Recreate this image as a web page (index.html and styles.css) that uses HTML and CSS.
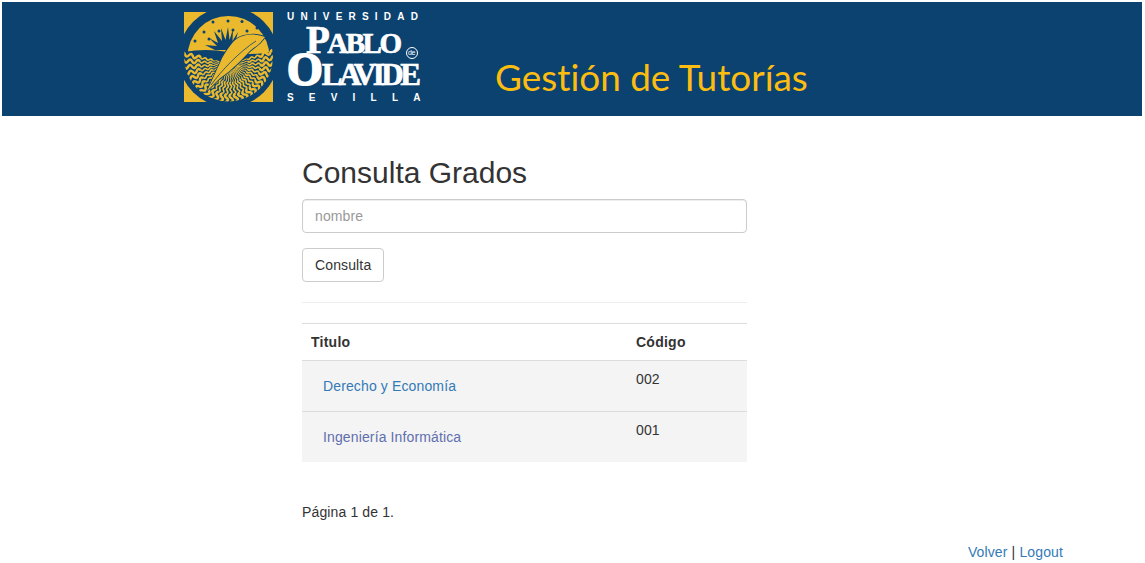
FILE: index.html
```html
<!doctype html>
<html lang="es">
  <head>
    <meta charset="UTF-8" />
    <meta name="viewport" content="width=device-width, initial-scale=1.0" />
    <title>Gestión de Tutorías</title>
    <link rel="stylesheet" href="styles.css">
  </head>
  <body>
    <header class="banner">
      <svg class="emblem" viewBox="0 0 89 90" aria-hidden="true">
        <defs>
          <clipPath id="disc"><circle cx="44.5" cy="45" r="44.500"/></clipPath>
          <g id="ray">
            <path stroke-width="1" d="M6 0Q7.500 .8 9 0T12 0T15 0T18 0"/>
            <path stroke-width="1.700" d="M18 0Q19.500 1.600 21 0T24 0T27 0T30 0"/>
            <path stroke-width="2.500" d="M30 0Q32 3.400 34 0T38 0T42 0T46 0T50 0T54 0"/>
          </g>
        </defs>
        <rect width="89" height="90" fill="#eab92e"/>
        <circle cx="44.500" cy="45" r="50" fill="#0b4270"/>
        <circle cx="44.500" cy="45" r="41" fill="#eab92e"/>
        <g clip-path="url(#disc)">
          <path d="M0 40Q22 36 44 40T89 40V90H0Z" fill="#0b4270"/>
          <g class="waves">
            <use href="#ray" transform="translate(46 52) rotate(-16)"/>
            <use href="#ray" transform="translate(46 52) rotate(-8)"/>
            <use href="#ray" transform="translate(46 52)"/>
            <use href="#ray" transform="translate(46 52) rotate(8)"/>
            <use href="#ray" transform="translate(46 52) rotate(16)"/>
            <use href="#ray" transform="translate(46 52) rotate(24)"/>
            <use href="#ray" transform="translate(46 52) rotate(32)"/>
            <use href="#ray" transform="translate(46 52) rotate(40)"/>
            <use href="#ray" transform="translate(46 52) rotate(48)"/>
            <use href="#ray" transform="translate(46 52) rotate(56)"/>
            <use href="#ray" transform="translate(46 52) rotate(64)"/>
            <use href="#ray" transform="translate(46 52) rotate(72)"/>
            <use href="#ray" transform="translate(46 52) rotate(80)"/>
            <use href="#ray" transform="translate(46 52) rotate(88)"/>
            <use href="#ray" transform="translate(46 52) rotate(96)"/>
            <use href="#ray" transform="translate(46 52) rotate(104)"/>
            <use href="#ray" transform="translate(46 52) rotate(112)"/>
            <use href="#ray" transform="translate(46 52) rotate(120)"/>
            <use href="#ray" transform="translate(46 52) rotate(128)"/>
            <use href="#ray" transform="translate(46 52) rotate(136)"/>
            <use href="#ray" transform="translate(46 52) rotate(144)"/>
            <use href="#ray" transform="translate(46 52) rotate(152)"/>
            <use href="#ray" transform="translate(46 52) rotate(160)"/>
            <use href="#ray" transform="translate(46 52) rotate(168)"/>
            <use href="#ray" transform="translate(46 52) rotate(176)"/>
            <use href="#ray" transform="translate(46 52) rotate(184)"/>
            <use href="#ray" transform="translate(46 52) rotate(192)"/>
          </g>
        </g>
        <g fill="#0b4270">
          <circle cx="29" cy="10" r="1.500"/><circle cx="44" cy="9" r="1.500"/><circle cx="58" cy="9.500" r="1.500"/>
          <circle cx="20" cy="20" r="1.500"/><circle cx="35" cy="19" r="1.500"/><circle cx="49" cy="18" r="1.500"/>
          <circle cx="63" cy="19" r="1.500"/><circle cx="73" cy="16" r="1.500"/><circle cx="11" cy="29" r="1.500"/>
          <circle cx="25" cy="27" r="1.500"/><circle cx="68" cy="27" r="1.500"/><circle cx="79" cy="25" r="1.500"/>
          <path d="M44 15L45.500 28L49 17L48.500 29L54 20L51 31L59 25L53 34L63 31L55 38H31L21 33L33 34L25 26L34 31L30 19L38 29L37 16L41.500 28Z"/>
        </g>
        <path class="feather" d="M81 25C74 22 66 22 59 24C52 26 49 30 46 34C42 39 38 45 36 51C33 57 31 62 29 66L23 79L31 71C34 68 36 66 39 64C43 61 47 58 51 54C56 50 60 45 64 41C69 36 73 34 76 31Z"/>
        <path d="M27 73C38 58 55 40 72 29" fill="none" stroke="#0b4270" stroke-width=".8"/>
      </svg>

      <div class="wordmark">
        <div class="wordmark-top">UNIVERSIDAD</div>
        <div class="wordmark-pablo">
          <span class="cap">P</span>ABLO<span class="de">de</span>
        </div>
        <div class="wordmark-olavide">
          <span class="cap">O</span>LAVIDE
        </div>
        <div class="wordmark-bottom">SEVILLA</div>
      </div>

      <div class="app-title">Gestión de Tutorías</div>
    </header>

    <main class="content">
      <h2>Consulta Grados</h2>
      <form>
        <input class="form-control" type="text" placeholder="nombre" />
        <button class="btn" type="button">Consulta</button>
      </form>
      <hr />
      <table class="grid">
        <thead>
          <tr>
            <th class="col-title">Titulo</th>
            <th>Código</th>
          </tr>
        </thead>
        <tbody>
          <tr>
            <td><a class="btn-link" href="#">Derecho y Economía</a></td>
            <td>002</td>
          </tr>
          <tr>
            <td><a class="btn-link visited" href="#">Ingeniería Informática</a></td>
            <td>001</td>
          </tr>
        </tbody>
      </table>
      <p class="pages">Página 1 de 1.</p>
    </main>

    <footer class="links">
      <a href="#">Volver</a> | <a href="#">Logout</a>
    </footer>
  </body>
</html>
```

FILE: styles.css
```css
* {
  box-sizing: border-box;
}

body {
  margin: 2px 3px 0 2px;
  font-family: 'Liberation Sans', Arial, sans-serif;
  font-size: 14px;
  line-height: 20px;
  letter-spacing: 0.13px;
  color: #333;
  background: #fff;
}

a {
  color: #337ab7;
  text-decoration: none;
}

/* banner */
.banner {
  display: flex;
  align-items: flex-start;
  height: 114px;
  padding: 10px 0 0 182px;
  background: #0b4270;
}

.emblem {
  flex: none;
  width: 89px;
  height: 90px;
}

.waves {
  fill: none;
  stroke: #eab92e;
}

.feather {
  fill: #eab92e;
  stroke: #0b4270;
  stroke-width: 1.6;
  paint-order: stroke;
}

.wordmark {
  flex: none;
  width: 136px;
  height: 90px;
  margin-left: 14px;
  color: #fff;
  white-space: nowrap;
}

.wordmark-top,
.wordmark-bottom {
  font-size: 10px;
  font-weight: bold;
  line-height: 9px;
}

.wordmark-top {
  letter-spacing: 6.200px;
}

.wordmark-bottom {
  margin-top: 1px;
  letter-spacing: 15.200px;
}

.wordmark-pablo,
.wordmark-olavide {
  font-family: 'Liberation Serif', serif;
  font-weight: bold;
  -webkit-text-stroke: 0.7px #fff;
}

.wordmark-pablo {
  height: 31px;
  margin-top: 1px;
  padding-left: 19px;
  font-size: 29px;
  line-height: 36px;
  letter-spacing: -2.500px;
}

.wordmark-pablo .cap {
  font-size: 39px;
}

.de {
  display: inline-block;
  width: 12px;
  height: 12px;
  margin-left: 6px;
  font-family: 'Liberation Sans', sans-serif;
  font-size: 7px;
  font-weight: normal;
  line-height: 10px;
  letter-spacing: -0.5px;
  text-align: center;
  vertical-align: -2px;
  border: 1px solid #fff;
  border-radius: 50%;
  -webkit-text-stroke: 0;
}

.wordmark-olavide {
  height: 39px;
  font-size: 31px;
  line-height: 34px;
  letter-spacing: -3.500px;
}

.wordmark-olavide .cap {
  font-size: 46px;
  -webkit-text-stroke: 2px #fff;
  letter-spacing: -1px;
}

.app-title {
  margin: 42px 0 0 72px;
  font-family: Lato, sans-serif;
  font-size: 36.900px;
  font-variant-ligatures: none;
  line-height: 46px;
  letter-spacing: 0;
  color: #fdbd10;
  white-space: nowrap;
}

/* main column */
.content {
  width: 445px;
  margin-left: 300px;
  padding-top: 40px;
}

h2 {
  margin: 0 0 10px;
  font-size: 30px;
  font-weight: 500;
  line-height: 33px;
  letter-spacing: 0;
}

.form-control {
  display: block;
  width: 100%;
  height: 34px;
  margin-bottom: 15px;
  padding: 6px 12px;
  font: inherit;
  letter-spacing: inherit;
  color: #555;
  border: 1px solid #ccc;
  border-radius: 4px;
  box-shadow: inset 0 1px 1px rgba(0, 0, 0, 0.075);
}

.form-control::placeholder {
  color: #999;
}

.btn {
  display: block;
  height: 34px;
  padding: 6px 12px;
  font: inherit;
  letter-spacing: inherit;
  color: #333;
  background: #fff;
  border: 1px solid #ccc;
  border-radius: 4px;
}

hr {
  margin: 20px 0;
  border: 0;
  border-top: 1px solid #eee;
}

.grid {
  width: 100%;
  border-spacing: 0;
  table-layout: fixed;
}

.grid th,
.grid td {
  padding: 8px;
  text-align: left;
  vertical-align: top;
}

.grid th {
  border-top: 1px solid #ddd;
  border-bottom: 1px solid #ddd;
  letter-spacing: 0.25px;
}

.grid .col-title {
  width: 326px;
  padding-left: 9px;
}

.grid td {
  background: #f4f4f4;
}

.grid tr + tr td {
  border-top: 1px solid #ddd;
}

.btn-link {
  display: inline-block;
  padding: 6px 12px;
  border: 1px solid transparent;
}

.btn-link.visited {
  color: #5f6fae;
}

.pages {
  margin: 40px 0 0;
}

.links {
  margin-top: 20px;
  padding-right: 79px;
  text-align: right;
}
```
